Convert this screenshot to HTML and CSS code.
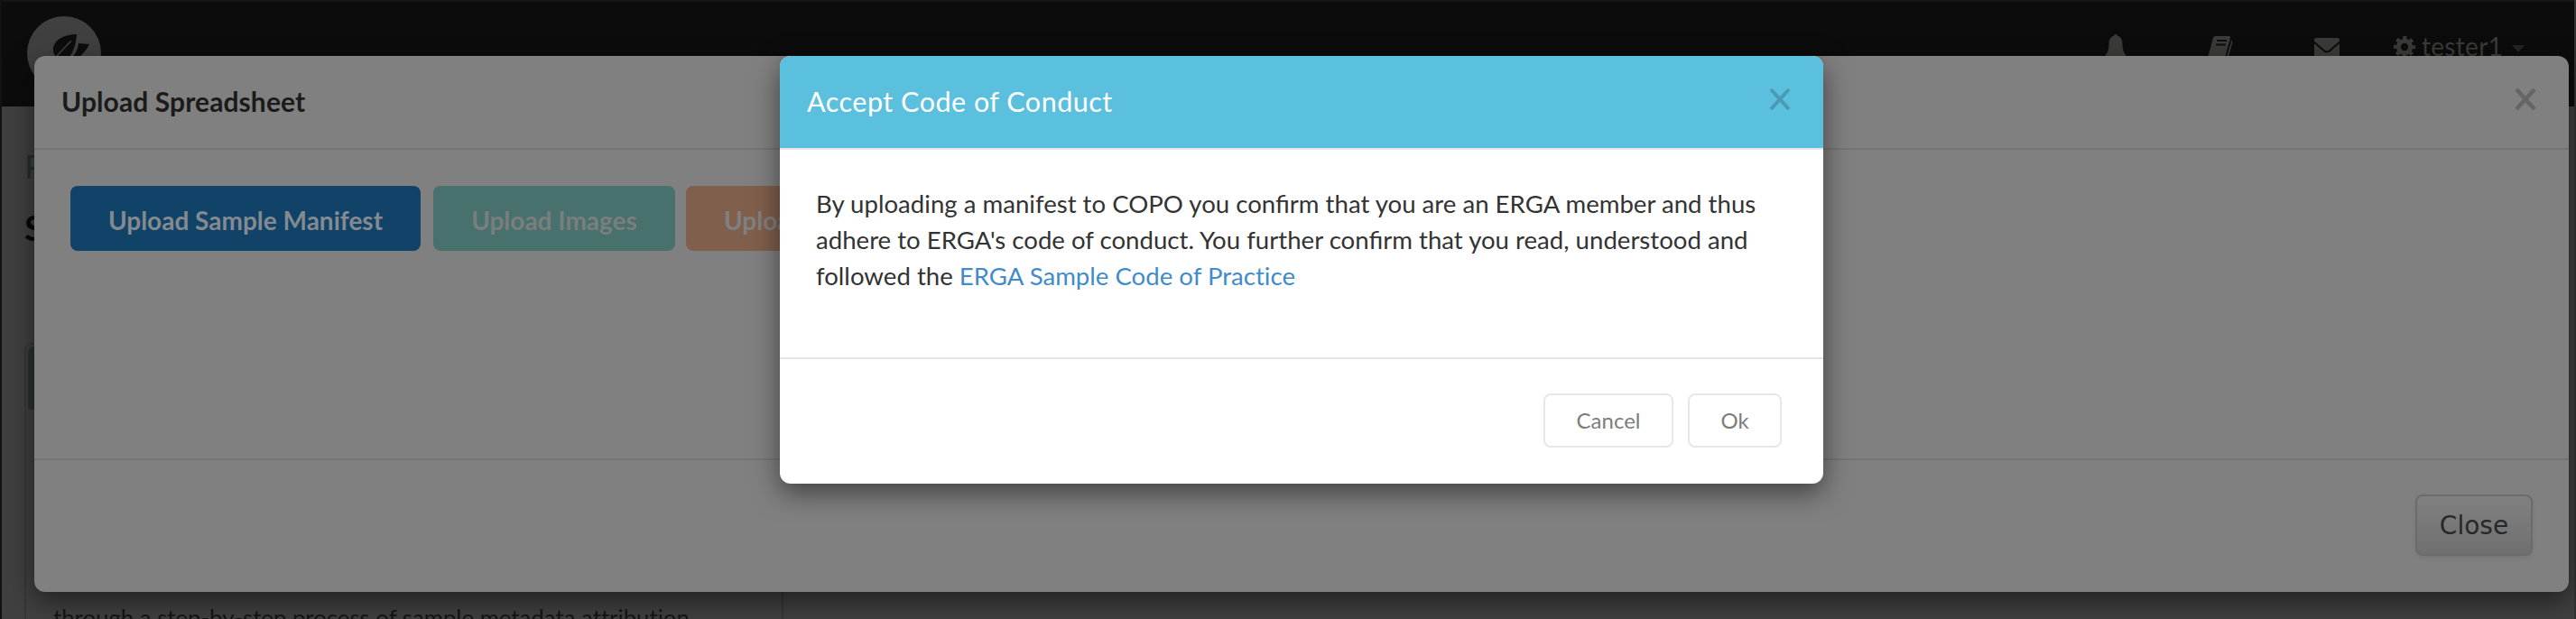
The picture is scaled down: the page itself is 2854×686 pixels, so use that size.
FILE: index.html
```html
<!DOCTYPE html>
<html lang="en">
<head>
<meta charset="utf-8">
<title>COPO</title>
<link rel="stylesheet" href="styles.css">
</head>
<body>
<div class="page">
  <nav class="navbar">
    <svg class="logo" viewBox="0 0 82 82">
      <circle cx="41" cy="41" r="41" fill="#404040"/>
      <path d="M55 20C42 20 28 26 29 38c0 3 2 6 5 8l10 2C51 42 54 32 55 20z" fill="#0c0c0c"/>
      <path d="M57 30l12 1c-4 8-8 11-14 17h-7c5-6 8-10 9-18z" fill="#0c0c0c"/>
      <path d="M33 44L49 27" stroke="#404040" stroke-width="1.6"/>
    </svg>
    <div class="nav-items">
      <svg class="bell" viewBox="0 0 28 28"><path d="M14 0c1.500 0 2 .8 2 1.800C20.500 3 21.500 7 21.500 11c0 6 1.500 9.500 4.500 13H2c3-3.500 4.500-7 4.500-13C6.500 7 7.500 3 12 1.800 12 .8 12.500 0 14 0z"/></svg>
      <svg class="book" viewBox="0 0 28 28"><path d="M8.500 0h15q2 0 1.500 2l-5.500 20q-.5 2-2.500 2H2q-2 0-1.500-2L6 2q.5-2 2.500-2z"/><path d="M10 5h11M9 9.500h11" class="cut"/><path d="M26 5q1 1 .5 2.500l-5 17" class="line"/></svg>
      <svg class="mail" viewBox="0 0 28 24"><path d="M0 2q0-2 2-2h24q2 0 2 2v20H0z"/><path d="M-1 4l11.500 10q3.500 3 7 0L29 4" class="cut"/></svg>
      <span class="user">
        <svg class="gear" viewBox="0 0 24 24"><circle cx="12" cy="12" r="6.700" class="ring"/><circle cx="12" cy="12" r="10.300" class="teeth"/></svg>
        <span class="name">tester1</span><span class="caret"></span>
      </span>
    </div>
  </nav>
  <main class="content">
    <div class="crumb">P</div>
    <div class="heading">S</div>
    <section class="card"><div class="card-head"></div><p class="card-text">through a step-by-step process of sample metadata attribution</p></section>
  </main>
</div>

<div class="modal outer">
  <header class="modal-head"><h4 class="outer-title">Upload Spreadsheet</h4>
    <svg class="close" viewBox="0 0 24 26"><path d="M2 2l20 22M22 2L2 24"/></svg></header>
  <div class="modal-body actions">
    <button class="action blue">Upload Sample Manifest</button>
    <button class="action teal">Upload Images</button>
    <button class="action orange">Upload</button>
  </div>
  <footer class="modal-foot"><button class="close-btn">Close</button></footer>
</div>

<div class="modal inner">
  <header class="modal-head"><h4 class="inner-title">Accept Code of Conduct</h4>
    <svg class="close" viewBox="0 0 24 26"><path d="M2 2l20 22M22 2L2 24"/></svg></header>
  <div class="modal-body message">By uploading a manifest to COPO you confirm that you are an ERGA member and thus<br>adhere to ERGA's code of conduct. You further confirm that you read, understood and<br>followed the <a class="link">ERGA Sample Code of Practice</a></div>
  <footer class="modal-foot"><button class="btn cancel">Cancel</button><button class="btn ok">Ok</button></footer>
</div>
</body>
</html>
```
FILE: styles.css
```css
* { box-sizing: border-box; }
html, body { height: 100%; margin: 0; overflow: hidden; }
body { font-family: Lato, "Liberation Sans", sans-serif; font-size: 28px; background: #404040; }
h4, p { margin: 0; font-weight: 400; }
button { font-family: inherit; padding: 0; }
.page { height: 686px; overflow: hidden; border-left: 2px solid #121212; border-right: 2px solid #333; }
.navbar { height: 118px; background: #0c0c0c; border-top: 2px solid #151515; display: flex; justify-content: space-between; padding: 16px 55px 0 28px; }
.logo { width: 82px; height: 82px; }
.nav-items { display: flex; align-items: flex-start; color: #3b3b39; }
.nav-items svg { fill: #3b3b39; flex: none; }
.bell { width: 28px; height: 28px; margin: 20px 88px 0 0; }
.book { width: 28px; height: 28px; margin: 22px 90px 0 0; }
.mail { width: 28px; height: 24px; margin: 24px 60px 0 0; }
.nav-items .cut { fill: none; stroke: #0c0c0c; stroke-width: 2; }
.nav-items .line { fill: none; stroke: #3b3b39; stroke-width: 1.6; }
.user { display: flex; align-items: flex-start; }
.gear { width: 24px; height: 24px; margin-top: 22px; }
.nav-items .ring { fill: none; stroke: #3b3b39; stroke-width: 5; }
.nav-items .teeth { fill: none; stroke: #3b3b39; stroke-width: 3.4; stroke-dasharray: 4.2 3.890; stroke-dashoffset: 2.1; }
.name { font-size: 28px; line-height: 34px; margin: 16px 12px 0 7px; width: 88px; letter-spacing: .3px; }
.caret { margin-top: 32px; border: 7px solid transparent; border-top: 8px solid #242424; border-bottom: 0; }
.content { padding-left: 25px; }
.crumb { font-size: 36px; line-height: 44px; color: #292c2f; margin-top: 44px; }
.heading { font-size: 39px; font-weight: 700; line-height: 48px; color: #080808; margin-top: 22px; }
.card { margin-top: 104px; width: 841px; height: 340px; border: 2px solid #373737; border-radius: 8px; }
.card-head { height: 70px; margin: 2px; background: #293134; border-radius: 6px 6px 0 0; }
.card-text { margin: 210px 0 0 30px; font-size: 25.750px; line-height: 40px; color: #151515; white-space: nowrap; font-variant-ligatures: none; }
.modal { position: absolute; top: 62px; display: flex; flex-direction: column; border-radius: 12px; box-shadow: 0 10px 30px rgba(0,0,0,.5); overflow: hidden; }
.outer { left: 38px; width: 2808px; height: 594px; background: #808080; }
.inner { left: 864px; width: 1156px; height: 474px; background: #fff; }
.modal-head { height: 104px; flex: none; display: flex; justify-content: space-between; align-items: flex-start; padding: 29px 36px 0 30px; border-bottom: 2px solid #757575; }
.inner .modal-head { background: #5bc0de; border-bottom-color: #e5e5e5; }
.outer-title { font-size: 30px; font-weight: 700; line-height: 42px; color: #1b1b1b; letter-spacing: .1px; }
.inner-title { font-size: 30.500px; line-height: 42px; color: #fff; letter-spacing: .5px; }
.close { width: 24px; height: 26px; margin-top: 6px; fill: none; stroke: #656565; stroke-width: 4.5; }
.inner .close { stroke: #499ab2; stroke-width: 4; }
.actions { display: flex; padding: 40px; height: 342px; align-items: flex-start; }
.action { flex: none; height: 72px; border: 0; border-radius: 8px; padding-top: 3px; font-size: 28px; font-weight: 700; color: #838a90; }
.blue { width: 388px; background: #114268; }
.teal { width: 268px; margin-left: 14px; background: #48716e; color: #7a7f7e; }
.orange { width: 190px; margin-left: 12px; padding-left: 42px; text-align: left; background: #805f4c; color: #808080; }
.modal-foot { border-top: 2px solid #757575; flex: 1; display: flex; justify-content: flex-end; align-items: flex-start; padding: 38px 40px 0; }
.inner .modal-foot { border-color: #e5e5e5; padding-right: 46px; }
.close-btn { width: 130px; height: 68px; border: 2px solid #6b6b6b; border-radius: 8px; background: linear-gradient(#808080, #707070); font: 28px "DejaVu Sans", sans-serif; color: #282828; box-shadow: 0 2px 4px rgba(0,0,0,.08); }
.message { height: 230px; padding: 40px; font-size: 27.600px; line-height: 40px; color: #333; white-space: nowrap; }
.link { color: #428bca; font-variant-ligatures: none; }
.btn { height: 60px; border: 2px solid #e7e7e7; border-radius: 8px; padding-bottom: 2px; background: #fff; color: #7d7d7d; font-size: 24px; }
.cancel { width: 144px; margin-right: 16px; }
.ok { width: 104px; }
```
